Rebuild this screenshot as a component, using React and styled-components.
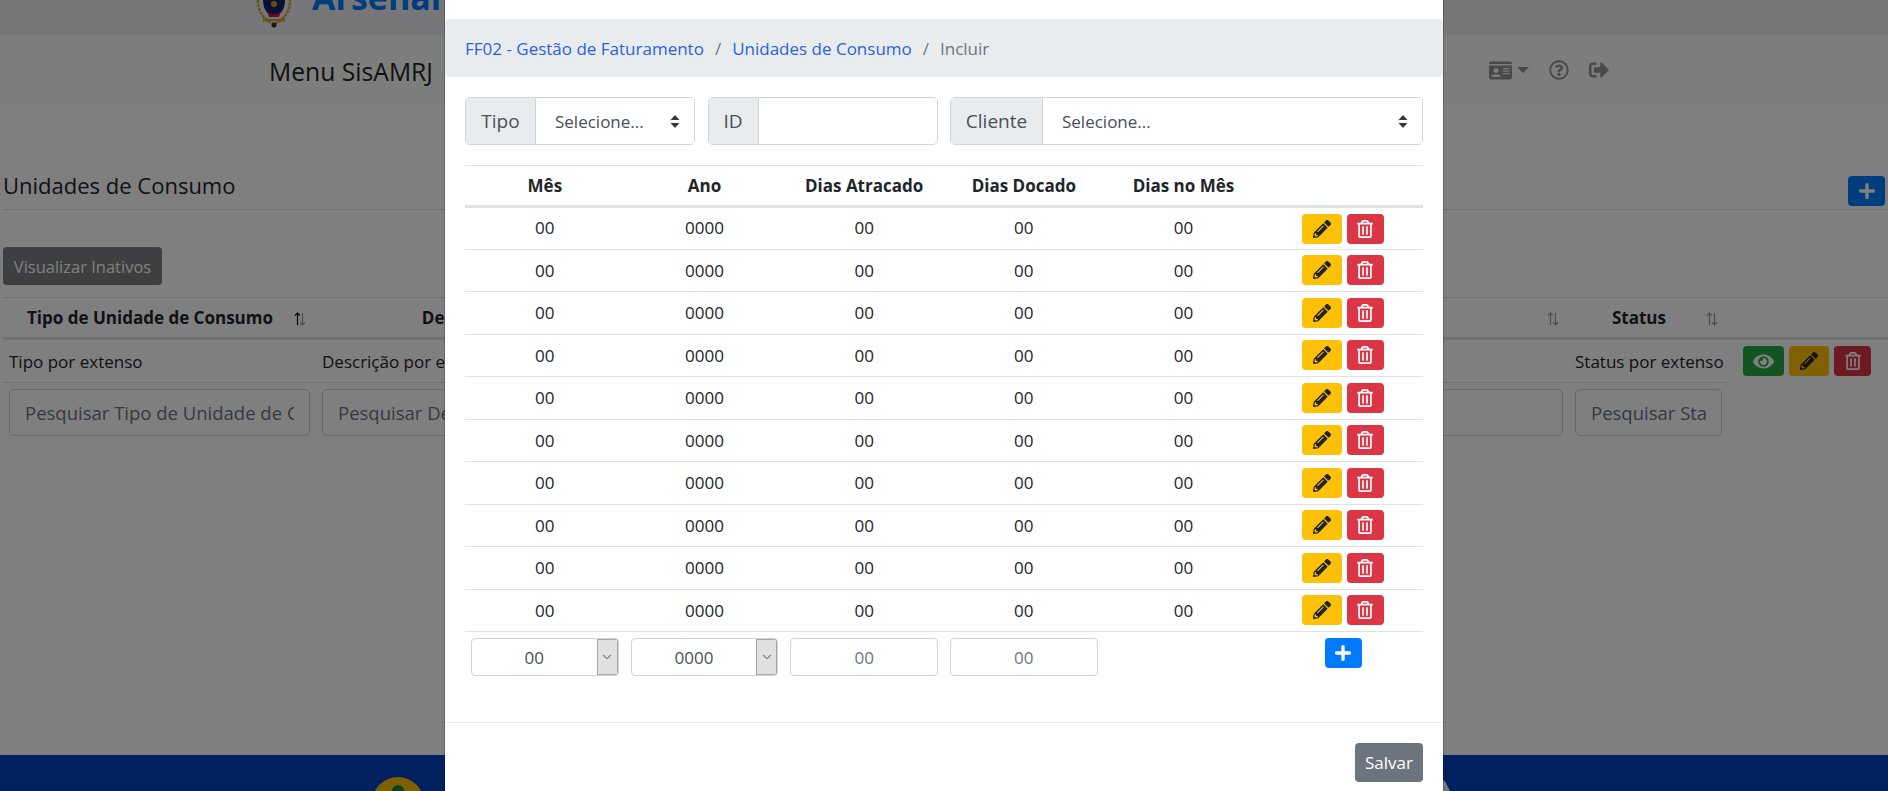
import React from 'react';
import styled, { createGlobalStyle } from 'styled-components';
import {
  FaPencilAlt, FaRegTrashAlt, FaEye, FaPlus, FaIdCard, FaRegQuestionCircle, FaSignOutAlt,
} from 'react-icons/fa';
import { ChevronDown } from 'lucide-react';

const GlobalStyle = createGlobalStyle`
  html, body {
    margin: 0;
    height: 100%;
    overflow: hidden;
    background: #fff;
    color: #212529;
    font-family: "Open Sans", "Noto Sans", "Liberation Sans", sans-serif;
    font-size: 17px;
  }
  * { box-sizing: border-box; }
`;

const Page = styled.div`
  height: 791px;
  display: flex;
  flex-direction: column;
  overflow: hidden;
`;

const TopBand = styled.header`
  height: 35px;
  flex: none;
  background: #eeeef2;
  display: flex;
  padding-left: 255px;
  gap: 19px;
  overflow: hidden;
`;

const BrandName = styled.span`
  align-self: flex-end;
  font-size: 34px;
  line-height: 34px;
  font-weight: 700;
  color: #007bff;
  margin-bottom: 21px;
  white-space: nowrap;
`;

const NavBar = styled.nav`
  height: 70px;
  flex: none;
  background: #f8fcf8;
  display: flex;
  align-items: center;
  padding-left: 269px;
`;

const NavTitle = styled.span`
  font-size: 24.7px;
  flex: 1;
  padding-top: 2px;
`;

const NavIcons = styled.div`
  display: flex;
  align-items: center;
  padding-right: 279px;
  color: #929292;
  font-size: 20px;
  gap: 20px;
`;

const NavIdCard = styled.span`
  display: flex;
  align-items: center;
  gap: 5px;
  font-size: 23px;
`;

const Caret = styled.span`
  width: 0;
  height: 0;
  border-left: 6px solid transparent;
  border-right: 6px solid transparent;
  border-top: 6px solid #929292;
`;

const Content = styled.main`
  flex: 1;
  padding-left: 3px;
`;

const TitleRow = styled.div`
  height: 105px;
  display: flex;
  align-items: flex-end;
  justify-content: space-between;
  border-bottom: 1px solid #dee2e6;
  padding: 0 3px 3px 0;
`;

const PageTitle = styled.h2`
  margin: 0 0 6px;
  font-size: 22px;
  font-weight: 400;
  line-height: 30px;
`;

const IconButton = styled.button`
  border: 0;
  padding: 0;
  width: ${p => p.$w || 37}px;
  height: 30px;
  border-radius: 4px;
  display: inline-flex;
  align-items: center;
  justify-content: center;
  font-size: 18px;
  background: ${p => p.$bg};
  color: ${p => p.$fg || '#fff'};
`;

const FilterRow = styled.div`
  margin-top: 37px;
  padding-bottom: 12px;
`;

const GhostDarkButton = styled.button`
  display: block;
  width: 159px;
  height: 38px;
  border: 0;
  border-radius: 4px;
  background: #343a40;
  color: #fff;
  opacity: 0.65;
  font: inherit;
  font-size: 16.5px;
`;

const ListGrid = styled.div`
  display: grid;
  grid-template-columns: 313px 313px 1fr 159px 160px;
  border-top: 1px solid #dee2e6;
`;

const ListHead = styled.div`
  height: 42px;
  padding-right: 19px;
  border-bottom: 3px solid #dee2e6;
  display: flex;
  align-items: center;
  justify-content: center;
  position: relative;
  font-weight: 700;
  font-size: 17px;
`;

const SortMark = styled.svg`
  position: absolute;
  right: ${p => p.$right}px;
  top: 14px;
  width: 12px;
  height: 14px;
`;

const ListCell = styled.div`
  height: 43px;
  padding: 0 6px;
  display: flex;
  align-items: center;
  white-space: nowrap;
  overflow: hidden;
  border-bottom: 1px solid #dee2e6;
`;

const ActionCell = styled.div`
  height: 43px;
  padding: 6px 0 0 15px;
  display: flex;
  gap: 5px;
`;

const SearchCell = styled.div`
  padding: 6px;
`;

const SearchInput = styled.input`
  width: 100%;
  height: 47px;
  padding: 0 15px;
  border: 1px solid #ced4da;
  border-radius: 5px;
  background: #fff;
  font: inherit;
  font-size: 18.5px;
  color: #495057;
  &::placeholder { color: #6c757d; opacity: 1; }
`;

const Footer = styled.footer`
  height: 36px;
  flex: none;
  background: #0040c0;
  position: relative;
  overflow: hidden;
`;

const FooterSeal = styled.div`
  position: absolute;
  left: 372px;
  top: 22px;
  width: 52px;
  height: 52px;
  border-radius: 50%;
  background: #fcbe00;
  &::after {
    content: '';
    position: absolute;
    left: 20px;
    top: 8px;
    width: 12px;
    height: 12px;
    border-radius: 50%;
    background: #0a8a3c;
  }
`;

const FooterBadge = styled.div`
  position: absolute;
  left: 1389px;
  top: 14px;
  width: 62px;
  height: 62px;
  border-radius: 50%;
  background: #f0f0f0;
`;

const Backdrop = styled.div`
  position: fixed;
  inset: 0;
  background: rgba(0, 0, 0, 0.5);
  overflow: hidden;
`;

const Dialog = styled.section`
  position: absolute;
  left: 444px;
  top: 0;
  bottom: 0;
  width: 1000px;
  background: #fff;
  background-clip: padding-box;
  border-left: 1px solid rgba(0, 0, 0, 0.2);
  border-right: 1px solid rgba(0, 0, 0, 0.2);
  display: flex;
  flex-direction: column;
`;

const Crumbs = styled.ol`
  list-style: none;
  margin: 19px 0 0;
  height: 58px;
  flex: none;
  padding: 1px 20px 0;
  background: #e9ecef;
  border-radius: 4px;
  display: flex;
  align-items: center;
  color: #6c757d;
`;

const Crumb = styled.li`
  & + &::before {
    content: '/';
    padding: 0 11px;
    color: #6c757d;
  }
`;

const CrumbLink = styled.a`
  color: #2c62d6;
  text-decoration: none;
`;

const ModalBody = styled.div`
  padding: 20px 20px 0;
  flex: none;
  height: 646px;
  border-bottom: 1px solid #e9ecef;
`;

const FormRow = styled.div`
  display: grid;
  grid-template-columns: 230px 230px 1fr;
  gap: 12.5px;
`;

const InputGroup = styled.div`
  display: flex;
  height: 48px;
  border: 1px solid #ced4da;
  border-radius: 5px;
  overflow: hidden;
  position: relative;
`;

const Addon = styled.span`
  flex: none;
  width: ${p => p.$w}px;
  background: #e9ecef;
  border-right: 1px solid #ced4da;
  color: #495057;
  font-size: 19px;
  display: flex;
  align-items: center;
  justify-content: center;
`;

const PlainInput = styled.input`
  flex: 1;
  min-width: 0;
  border: 0;
  outline: 0;
  background: #fff;
`;

const SelectBox = styled.select`
  flex: 1;
  min-width: 0;
  border: 0;
  outline: 0;
  appearance: none;
  background: #fff;
  padding-left: 19px;
  font: inherit;
  color: #495057;
`;

const UpDown = styled.svg`
  position: absolute;
  right: 14px;
  top: 17px;
  width: 10px;
  height: 13px;
  pointer-events: none;
`;

const ItemTable = styled.table`
  width: 958px;
  margin-top: 20px;
  border-collapse: collapse;
  table-layout: fixed;
  border-top: 1px solid #dee2e6;
`;

const HeadCell = styled.th`
  height: 41px;
  padding: 0 0 1px;
  border-bottom: 3px solid #dee2e6;
  text-align: center;
  font-weight: 700;
  font-size: 17px;
`;

const BodyCell = styled.td`
  height: 42.5px;
  padding: ${p => p.$pad || '0'};
  text-align: center;
  border-bottom: 1px solid #dee2e6;
`;

const EntryCell = styled.td`
  padding: 6px 6px 0;
  vertical-align: top;
  text-align: center;
`;

const RowActions = styled.div`
  display: flex;
  justify-content: center;
  gap: 5px;
  padding-right: 1px;
`;

const PickBox = styled.div`
  display: flex;
  height: 38px;
  border: 1px solid #ced4da;
  border-radius: 4px;
  overflow: hidden;
  color: #495057;
`;

const PickValue = styled.span`
  flex: 1;
  display: flex;
  align-items: center;
  justify-content: center;
`;

const PickArrow = styled.span`
  flex: none;
  width: 21px;
  background: #e0e0e0;
  border: 1px solid #a8a8a8;
  display: flex;
  align-items: center;
  justify-content: center;
  color: #333;
`;

const EntryInput = styled.input`
  width: 100%;
  height: 38px;
  border: 1px solid #ced4da;
  border-radius: 4px;
  text-align: center;
  font: inherit;
  &::placeholder { color: #6c757d; opacity: 1; }
`;

const ModalFooter = styled.div`
  padding: 20px;
  display: flex;
  justify-content: flex-end;
`;

const SaveButton = styled.button`
  width: 68px;
  height: 39px;
  border: 0;
  border-radius: 4px;
  background: #6c757d;
  color: #fff;
  font: inherit;
`;

const Crest = () => (
  <svg width="38" height="29" viewBox="0 0 38 29">
    <path d="M3 0c0 12 6 20 16 24C29 20 35 12 35 0" fill="none" stroke="#c9a227" strokeWidth="2.5" strokeDasharray="3 1" />
    <path d="M8 0h22c0 10-5 15-11 17C13 15 8 10 8 0z" fill="#1a1f6b" />
    <path d="M12 11c3 4 11 4 14 0l-2 6h-10z" fill="#c2185b" />
    <circle cx="19" cy="4" r="3" fill="#c9a227" />
    <path d="M8 21l22-2M8 19l22 2" stroke="#c9a227" strokeWidth="1.5" />
    <circle cx="19" cy="25" r="2.5" fill="#333" />
  </svg>
);

const SortIcon = ({ right, active }) => (
  <SortMark $right={right} viewBox="0 0 12 14" fill="none" strokeWidth="1.2">
    <path d="M3.5 13V1M1 3.5L3.5 1 6 3.5" stroke={active ? '#111' : '#9a9a9a'} />
    <path d="M8.5 1v12M6 10.5L8.5 13l2.5-2.5" stroke="#9a9a9a" />
  </SortMark>
);

const SelectCaret = () => (
  <UpDown viewBox="0 0 10 13">
    <path d="M5 0l4.5 5H.5zM5 13L.5 8h9z" fill="#343a40" />
  </UpDown>
);

const months = Array.from({ length: 10 }, (_, i) => i);

function EditButton() {
  return <IconButton $w={40} $bg="#ffc107" $fg="#212529"><FaPencilAlt /></IconButton>;
}

function DeleteButton() {
  return <IconButton $bg="#dc3545"><FaRegTrashAlt /></IconButton>;
}

function PickField({ value }) {
  return (
    <PickBox>
      <PickValue>{value}</PickValue>
      <PickArrow><ChevronDown size={14} strokeWidth={1.5} /></PickArrow>
    </PickBox>
  );
}

export default function App() {
  return (
    <Page>
      <GlobalStyle />
      <TopBand>
        <Crest />
        <BrandName>Arsenal de Marinha do Rio de Janeiro</BrandName>
      </TopBand>
      <NavBar>
        <NavTitle>Menu SisAMRJ</NavTitle>
        <NavIcons>
          <NavIdCard><FaIdCard /><Caret /></NavIdCard>
          <FaRegQuestionCircle />
          <FaSignOutAlt />
        </NavIcons>
      </NavBar>
      <Content>
        <TitleRow>
          <PageTitle>Unidades de Consumo</PageTitle>
          <IconButton $bg="#007bff"><FaPlus /></IconButton>
        </TitleRow>
        <FilterRow>
          <GhostDarkButton disabled>Visualizar Inativos</GhostDarkButton>
        </FilterRow>
        <ListGrid>
          <ListHead>Tipo de Unidade de Consumo<SortIcon right={10} active /></ListHead>
          <ListHead>Descrição<SortIcon right={10} /></ListHead>
          <ListHead><SortIcon right={10} /></ListHead>
          <ListHead>Status<SortIcon right={10} /></ListHead>
          <ListHead />
          <ListCell>Tipo por extenso</ListCell>
          <ListCell>Descrição por extenso</ListCell>
          <ListCell />
          <ListCell>Status por extenso</ListCell>
          <ActionCell>
            <IconButton $w={41} $bg="#28a745"><FaEye size={21} /></IconButton>
            <EditButton />
            <DeleteButton />
          </ActionCell>
          <SearchCell><SearchInput placeholder="Pesquisar Tipo de Unidade de Consumo" /></SearchCell>
          <SearchCell><SearchInput placeholder="Pesquisar Descrição" /></SearchCell>
          <SearchCell><SearchInput /></SearchCell>
          <SearchCell><SearchInput placeholder="Pesquisar Status" /></SearchCell>
        </ListGrid>
      </Content>
      <Footer><FooterSeal /><FooterBadge /></Footer>

      <Backdrop>
        <Dialog>
          <Crumbs>
            <Crumb><CrumbLink href="#">FF02 - Gestão de Faturamento</CrumbLink></Crumb>
            <Crumb><CrumbLink href="#">Unidades de Consumo</CrumbLink></Crumb>
            <Crumb>Incluir</Crumb>
          </Crumbs>
          <ModalBody>
            <FormRow>
              <InputGroup>
                <Addon $w={70}>Tipo</Addon>
                <SelectBox><option>Selecione...</option></SelectBox>
                <SelectCaret />
              </InputGroup>
              <InputGroup>
                <Addon $w={50}>ID</Addon>
                <PlainInput />
              </InputGroup>
              <InputGroup>
                <Addon $w={92}>Cliente</Addon>
                <SelectBox><option>Selecione...</option></SelectBox>
                <SelectCaret />
              </InputGroup>
            </FormRow>
            <ItemTable>
              <thead>
                <tr>
                  <HeadCell>Mês</HeadCell>
                  <HeadCell>Ano</HeadCell>
                  <HeadCell>Dias Atracado</HeadCell>
                  <HeadCell>Dias Docado</HeadCell>
                  <HeadCell>Dias no Mês</HeadCell>
                  <HeadCell />
                </tr>
              </thead>
              <tbody>
                {months.map(m => {
                  const textPad = m === 0 ? '0 0 2px' : '0';
                  return (
                    <tr key={m}>
                      <BodyCell $pad={textPad}>00</BodyCell>
                      <BodyCell $pad={textPad}>0000</BodyCell>
                      <BodyCell $pad={textPad}>00</BodyCell>
                      <BodyCell $pad={textPad}>00</BodyCell>
                      <BodyCell $pad={textPad}>00</BodyCell>
                      <BodyCell $pad={m === 0 ? '2px 0 0' : '0'}>
                        <RowActions><EditButton /><DeleteButton /></RowActions>
                      </BodyCell>
                    </tr>
                  );
                })}
                <tr>
                  <EntryCell><PickField value="00" /></EntryCell>
                  <EntryCell><PickField value="0000" /></EntryCell>
                  <EntryCell><EntryInput placeholder="00" /></EntryCell>
                  <EntryCell><EntryInput placeholder="00" /></EntryCell>
                  <EntryCell />
                  <EntryCell><IconButton $bg="#007bff"><FaPlus /></IconButton></EntryCell>
                </tr>
              </tbody>
            </ItemTable>
          </ModalBody>
          <ModalFooter><SaveButton>Salvar</SaveButton></ModalFooter>
        </Dialog>
      </Backdrop>
    </Page>
  );
}
